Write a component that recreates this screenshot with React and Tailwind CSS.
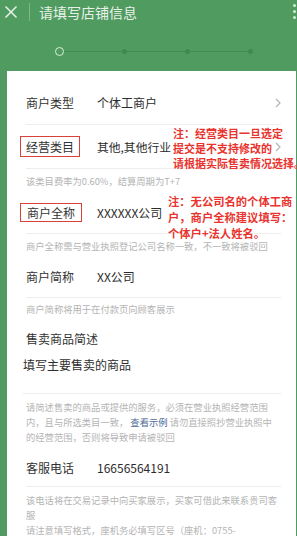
import React from "react";

function Chevron() {
  return (
    <svg width="6" height="10" viewBox="0 0 6 10" className="shrink-0">
      <path d="M1 1 L5 5 L1 9" fill="none" stroke="#b5b5b5" strokeWidth="1.2" />
    </svg>
  );
}

function Help({ children, className = "" }) {
  return (
    <div className={"text-[9.3px] leading-[15px] text-[#b4b4b4] whitespace-nowrap " + className}>
      {children}
    </div>
  );
}

export default function App() {
  return (
    <div className="w-[297px] h-[536px] overflow-hidden bg-[#509b5f] font-['Noto_Sans_CJK_SC','Noto_Sans',sans-serif]">
      {/* header */}
      <div className="relative h-[24px] flex items-center">
        <svg width="14" height="14" viewBox="0 0 14 14" className="ml-[4px]">
          <path d="M1.5 1.5 L12.5 12.5 M12.5 1.5 L1.5 12.5" stroke="#e9f2ea" strokeWidth="1.5" />
        </svg>
        <div className="ml-[11px] w-px h-[18px] bg-[#7fb78b]" />
        <div className="ml-[9px] text-[14px] leading-[18px] text-[#e8f1e9]">请填写店铺信息</div>
        <div className="absolute right-[1px] top-[4px] flex flex-col gap-[3px]">
          <div className="w-[3px] h-[3px] rounded-full bg-[#d7e9da]" />
          <div className="w-[3px] h-[3px] rounded-full bg-[#d7e9da]" />
          <div className="w-[3px] h-[3px] rounded-full bg-[#d7e9da]" />
        </div>
      </div>

      {/* steps */}
      <div className="flex items-center h-[9px] mt-[23px] mb-[15px] ml-[55px]">
        <div className="w-[9px] h-[9px] rounded-full border-[1.5px] border-[#d6eeda]" />
        <div className="w-[58px] h-px bg-[#438d53]" />
        <div className="w-[5px] h-[5px] rounded-full bg-[#3f8a50]" />
        <div className="w-[58px] h-px bg-[#438d53]" />
        <div className="w-[5px] h-[5px] rounded-full bg-[#3f8a50]" />
        <div className="w-[58px] h-px bg-[#438d53]" />
        <div className="w-[5px] h-[5px] rounded-full bg-[#3f8a50]" />
      </div>

      {/* card */}
      <div className="ml-[7px] mr-[1px] bg-white pt-[10px] pl-[19px] pr-[15px] h-[470px] text-[#333333]">
        {/* 商户类型 */}
        <div className="h-[44px] flex items-center border-b border-[#eeeeee] text-[12px] leading-[16px]">
          <div className="w-[71px]">商户类型</div>
          <div className="flex-1 text-[#2b2b2b]">个体工商户</div>
          <Chevron />
        </div>

        {/* 经营类目 */}
        <div className="relative h-[44px] flex items-center border-b border-[#eeeeee] text-[12px] leading-[16px]">
          <div className="w-[71px]">
            <span className="-ml-[6px] px-[5px] py-[1px] border-[1.5px] border-[#d9403a]">经营类目</span>
          </div>
          <div className="flex-1 text-[#2b2b2b] text-[11.8px]">其他,其他行业</div>
          <Chevron />
          <div className="absolute left-[147px] top-[1px] text-[11px] leading-[15px] font-bold text-[#e8332e] whitespace-nowrap">
            注：经营类目一旦选定
            <br />
            提交是不支持修改的
            <br />
            请根据实际售卖情况选择。
          </div>
        </div>
        <Help className="pt-[5px] pb-[3px]">该类目费率为0.60%，结算周期为T+7</Help>

        {/* 商户全称 */}
        <div className="relative h-[42px] flex items-center border-b border-[#eeeeee] text-[12px] leading-[16px]">
          <div className="w-[71px]">
            <span className="-ml-[6px] px-[6px] py-0 border-[1.5px] border-[#d9403a]">商户全称</span>
          </div>
          <div className="flex-1 text-[#2b2b2b]">XXXXXX公司</div>
          <div className="absolute left-[142px] top-[1px] text-[11.3px] leading-[16px] font-bold text-[#e8332e] whitespace-nowrap">
            注：无公司名的个体工商
            <br />
            户，商户全称建议填写：
            <br />
            个体户+法人姓名。
          </div>
        </div>
        <Help className="pt-[5px] pb-[2px]">商户全称需与营业执照登记公司名称一致，不一致将被驳回</Help>

        {/* 商户简称 */}
        <div className="h-[42px] flex items-center border-b border-[#eeeeee] text-[12px] leading-[16px]">
          <div className="w-[71px]">商户简称</div>
          <div className="flex-1 text-[#2b2b2b]">XX公司</div>
        </div>
        <Help className="pt-[4px]">商户简称将用于在付款页向顾客展示</Help>

        {/* 售卖商品简述 */}
        <div className="pt-[14px] text-[12px] leading-[16px]">售卖商品简述</div>
        <div className="pt-[10px] pb-[20px] -ml-[3px] text-[12px] leading-[16px] text-[#2e2e2e] border-b border-[#eeeeee]">
          填写主要售卖的商品
        </div>
        <Help className="pt-[6px]">
          请简述售卖的商品或提供的服务，必须在营业执照经营范围
          <br />
          内，且与所选类目一致，
          <span className="text-[#4d6a93]"> 查看示例 </span>
          请勿直接照抄营业执照中
          <br />
          的经营范围，否则将导致申请被驳回
        </Help>

        {/* 客服电话 */}
        <div className="mt-[4px] h-[38px] flex items-center border-b border-[#eeeeee] text-[12px] leading-[16px]">
          <div className="w-[71px]">客服电话</div>
          <div className="flex-1 text-[#2b2b2b]">16656564191</div>
        </div>
        <Help className="pt-[6px] leading-[14px]">
          该电话将在交易记录中向买家展示，买家可借此来联系贵司客
          <br />
          服
          <br />
          请注意填写格式，座机务必填写区号（座机：0755-
        </Help>
      </div>
    </div>
  );
}
